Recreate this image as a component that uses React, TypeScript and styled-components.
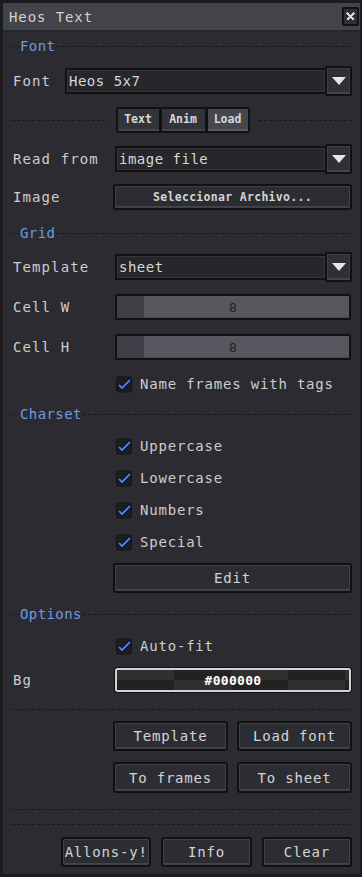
import React from 'react'
import styled, { createGlobalStyle } from 'styled-components'

const GlobalStyle = createGlobalStyle`
  html, body {
    margin: 0;
    padding: 0;
    background: #1c1c20;
  }
  body {
    font-family: 'DejaVu Sans Mono', 'Liberation Mono', monospace;
    font-size: 14px;
    -webkit-font-smoothing: none;
  }
`

const Window = styled.div`
  width: 362px;
  height: 877px;
  box-sizing: border-box;
  background: #2c2b31;
  border: 3px solid #1c1c20;
  border-right-width: 2px;
  display: flex;
  flex-direction: column;
  overflow: hidden;
`

const TitleBar = styled.div`
  height: 27px;
  flex: none;
  background: #42434b;
  border-bottom: 2px solid #25252a;
  display: flex;
  align-items: center;
  justify-content: space-between;
  padding: 0 1px 0 6px;
  color: #d2d2d2;
  letter-spacing: 0.9px;
`

const CloseBox = styled.div`
  width: 13px;
  height: 15px;
  border: 2px solid #121214;
  border-radius: 2px;
  background: #2f3036;
  display: flex;
  align-items: center;
  justify-content: center;
`

const Body = styled.div`
  flex: 1;
  display: flex;
  flex-direction: column;
  padding: 0 8px 0 9px;
`

interface RowProps {
  $h: number
  $mt: number
  $pl?: number
}

const Row = styled.div<RowProps>`
  height: ${(p) => p.$h}px;
  margin-top: ${(p) => p.$mt}px;
  padding-left: ${(p) => p.$pl ?? 0}px;
  display: flex;
  align-items: center;
  flex: none;
`

const Label = styled.div<{ $w?: number }>`
  width: ${(p) => p.$w ?? 101}px;
  flex: none;
  padding-left: 1px;
  box-sizing: border-box;
  color: #cdcdcd;
  letter-spacing: 1.1px;
  white-space: nowrap;
`

const Dash = styled.div<{ $w?: number }>`
  height: 1px;
  ${(p) => (p.$w ? `width: ${p.$w}px; flex: none;` : 'flex: 1;')}
  background: repeating-linear-gradient(
    to right,
    #17171a 0 3px,
    transparent 3px 5px
  );
`

const HeaderText = styled.span`
  color: #6d9be0;
  letter-spacing: 0.4px;
  padding: 0 1px;
`

const Field = styled.div`
  flex: 1;
  height: 22px;
  margin-left: 2px;
  border: 2px solid #111113;
  border-right: none;
  background: #26262b;
  box-shadow: inset 0 0 0 1px #35363c;
  color: #d6d6d6;
  letter-spacing: 0.5px;
  display: flex;
  align-items: center;
  padding-left: 2px;
`

const DropButton = styled.div`
  width: 23px;
  height: 26px;
  flex: none;
  border: 2px solid #111113;
  border-radius: 2px;
  background: #2f3036;
  box-shadow: inset 0 -2px 0 #44454c, inset 0 0 0 1px #3d3e45;
  display: flex;
  align-items: center;
  justify-content: center;
`

const Button = styled.div<{ $mini?: boolean; $ml?: number }>`
  box-sizing: border-box;
  height: 100%;
  margin-left: ${(p) => p.$ml ?? 0}px;
  flex: 1;
  border: 2px solid #111113;
  border-radius: 3px;
  background: #2c2d33;
  box-shadow: inset 0 0 0 1px #404148, inset 0 -2px 0 #44454c;
  color: #d4d4d4;
  display: flex;
  align-items: center;
  justify-content: center;
  letter-spacing: ${(p) => (p.$mini ? '0.3px' : '0.8px')};
  font-size: ${(p) => (p.$mini ? '11.5px' : '14px')};
  font-weight: ${(p) => (p.$mini ? 700 : 400)};
  white-space: nowrap;
`

const Tabs = styled.div`
  display: flex;
  height: 100%;
  margin: 0 10px;
`

const Tab = styled.div<{ $active?: boolean; $w: number }>`
  width: ${(p) => p.$w}px;
  box-sizing: border-box;
  height: 100%;
  border: 2px solid #111113;
  border-radius: 2px;
  margin-right: -1px;
  background: ${(p) => (p.$active ? '#47484f' : '#33343a')};
  box-shadow: inset 0 -2px 0 ${(p) => (p.$active ? '#5a5b62' : '#44454c')};
  color: #d8d8d8;
  font-size: 11.5px;
  font-weight: 700;
  display: flex;
  align-items: center;
  justify-content: center;
  padding-bottom: 2px;
`

const Slider = styled.div`
  flex: 1;
  height: 100%;
  box-sizing: border-box;
  margin: 0 1px 0 2px;
  border: 2px solid #111113;
  border-radius: 2px;
  background: #56575f;
  box-shadow: inset 0 -1px 0 #4a4b52;
  position: relative;
  display: flex;
  align-items: center;
  justify-content: center;
  color: #232327;
  font-size: 13px;
`

const SliderFill = styled.div`
  position: absolute;
  left: 0;
  top: 0;
  bottom: 0;
  width: 27px;
  background: #3e3f46;
`

const SliderValue = styled.span`
  position: relative;
`

const CheckText = styled.span`
  color: #cdcdcd;
  letter-spacing: 0.8px;
  margin-left: 7px;
`

const ColorButton = styled.div`
  flex: 1;
  height: 100%;
  box-sizing: border-box;
  margin-left: 1px;
  border: 1px solid #111113;
  border-radius: 3px;
  box-shadow: inset 0 0 0 2px #d2d2d2;
  padding: 2px;
  display: flex;
`

const Checker = styled.div`
  flex: 1;
  border-radius: 1px;
  background:
    repeating-linear-gradient(
      to right,
      #303030 0 57px,
      #222222 57px 114px
    ) top / 100% 50% no-repeat,
    repeating-linear-gradient(
      to right,
      #222222 0 57px,
      #303030 57px 114px
    ) bottom / 100% 50% no-repeat;
  display: flex;
  align-items: center;
  justify-content: center;
  color: #ffffff;
  font-size: 13px;
  font-weight: 700;
  letter-spacing: 0.3px;
`

const ButtonGrid = styled.div<{ $cols: number; $gap: number; $ml: number }>`
  display: grid;
  grid-template-columns: repeat(${(p) => p.$cols}, 1fr);
  column-gap: ${(p) => p.$gap}px;
  margin-left: ${(p) => p.$ml}px;
  flex: 1;
  height: 100%;
`

const Triangle = () => (
  <svg width="14" height="8" viewBox="0 0 14 8">
    <polygon points="0,0 14,0 7,8" fill="#e6e6e6" />
  </svg>
)

const CloseIcon = () => (
  <svg width="9" height="9" viewBox="0 0 9 9" shapeRendering="crispEdges">
    <path d="M1 1 L8 8 M8 1 L1 8" stroke="#d8d8d8" strokeWidth="1.6" />
  </svg>
)

const Check = () => (
  <svg width="17" height="17" viewBox="0 0 17 17" style={{ flex: 'none' }}>
    <rect x="0.5" y="1" width="15" height="15" rx="2" fill="#1d1d21" stroke="#141416" />
    <polyline points="3,9 6,12 14,4" fill="none" stroke="#0e0e10" strokeWidth="4" />
    <polyline points="3,9 6,12 14,4" fill="none" stroke="#4c7fe6" strokeWidth="2" />
  </svg>
)

const Header: React.FC<{ title: string; h: number; mt: number }> = ({ title, h, mt }) => (
  <Row $h={h} $mt={mt}>
    <Dash $w={7} />
    <HeaderText>{title}</HeaderText>
    <Dash />
  </Row>
)

const Combo: React.FC<{ value: string }> = ({ value }) => (
  <>
    <Field>{value}</Field>
    <DropButton>
      <Triangle />
    </DropButton>
  </>
)

const CheckRow: React.FC<{ text: string; mt: number }> = ({ text, mt }) => (
  <Row $h={20} $mt={mt} $pl={104}>
    <Check />
    <CheckText>{text}</CheckText>
  </Row>
)

export default function App() {
  return (
    <>
      <GlobalStyle />
      <Window>
        <TitleBar>
          <span>Heos Text</span>
          <CloseBox>
            <CloseIcon />
          </CloseBox>
        </TitleBar>
        <Body>
          <Header title="Font" h={28} mt={0} />
          <Row $h={30} $mt={6}>
            <Label $w={51}>Font</Label>
            <Combo value="Heos 5x7" />
          </Row>
          <Row $h={26} $mt={11}>
            <Dash />
            <Tabs>
              <Tab $w={45}>Text</Tab>
              <Tab $w={47}>Anim</Tab>
              <Tab $w={44} $active>
                Load
              </Tab>
            </Tabs>
            <Dash />
          </Row>
          <Row $h={30} $mt={11}>
            <Label>Read from</Label>
            <Combo value="image file" />
          </Row>
          <Row $h={26} $mt={10}>
            <Label>Image</Label>
            <Button $mini>Seleccionar Archivo...</Button>
          </Row>
          <Header title="Grid" h={20} mt={13} />
          <Row $h={30} $mt={9}>
            <Label>Template</Label>
            <Combo value="sheet" />
          </Row>
          <Row $h={26} $mt={12}>
            <Label>Cell W</Label>
            <Slider>
              <SliderFill />
              <SliderValue>8</SliderValue>
            </Slider>
          </Row>
          <Row $h={26} $mt={14}>
            <Label>Cell H</Label>
            <Slider>
              <SliderFill />
              <SliderValue>8</SliderValue>
            </Slider>
          </Row>
          <CheckRow text="Name frames with tags" mt={14} />
          <Header title="Charset" h={20} mt={10} />
          <CheckRow text="Uppercase" mt={12} />
          <CheckRow text="Lowercase" mt={12} />
          <CheckRow text="Numbers" mt={12} />
          <CheckRow text="Special" mt={12} />
          <Row $h={30} $mt={11}>
            <Button $ml={101}>Edit</Button>
          </Row>
          <Header title="Options" h={20} mt={11} />
          <CheckRow text="Auto-fit" mt={12} />
          <Row $h={26} $mt={11}>
            <Label>Bg</Label>
            <ColorButton>
              <Checker>#000000</Checker>
            </ColorButton>
          </Row>
          <Row $h={10} $mt={11}>
            <Dash />
          </Row>
          <Row $h={30} $mt={7}>
            <ButtonGrid $cols={2} $gap={9} $ml={101}>
              <Button>Template</Button>
              <Button>Load font</Button>
            </ButtonGrid>
          </Row>
          <Row $h={31} $mt={11}>
            <ButtonGrid $cols={2} $gap={9} $ml={101}>
              <Button>To frames</Button>
              <Button>To sheet</Button>
            </ButtonGrid>
          </Row>
          <Row $h={10} $mt={11}>
            <Dash />
          </Row>
          <Row $h={10} $mt={5}>
            <Dash />
          </Row>
          <Row $h={30} $mt={8}>
            <ButtonGrid $cols={3} $gap={10} $ml={49}>
              <Button>Allons-y!</Button>
              <Button>Info</Button>
              <Button>Clear</Button>
            </ButtonGrid>
          </Row>
        </Body>
      </Window>
    </>
  )
}
